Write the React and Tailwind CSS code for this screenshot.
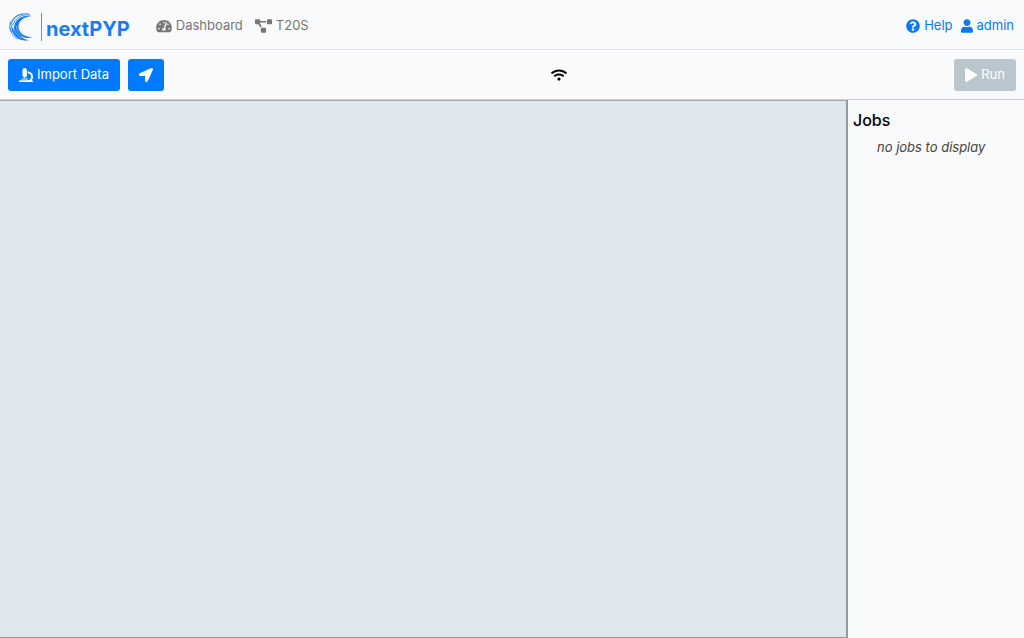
import React from "react";
import {
  FaLocationArrow,
  FaMicroscope,
  FaPlay,
  FaProjectDiagram,
  FaQuestionCircle,
  FaTachometerAlt,
  FaUser,
  FaWifi,
} from "react-icons/fa";

/**
 * Brand mark: a crescent made of brush strokes, a divider and the product name.
 */
const Logo = () => (
  <a href="#home" className="flex items-center text-[#1a7cf5]" aria-label="nextPYP">
    <svg className="h-7 w-6" viewBox="0 0 24 28" fill="none" aria-hidden="true">
      <path
        d="M2 12c0 6 3 12 9 14.500 4 1.500 7 1.300 9 .5-3 0-6-1.500-8-4 4 2.500 8 2.500 11.500 1C16 24.500 10 20 9.500 14c-.3-5 4-10 13.500-11C14 2 7 5.500 5.500 12l-1 5Z"
        fill="currentColor"
      />
      <path
        d="M20 1C11-.5 4 4 2 12M21 2C12 1 6 5 3.500 13M14 1C7 2 2 6 1 12"
        stroke="currentColor"
        strokeWidth="0.8"
      />
      <path d="M1 9v6l2 5M0.500 13l1 5 3 5 4 3" stroke="currentColor" strokeWidth="0.7" />
      <path d="M7.500 13c0 5 3 9 8 12M5 16c1 4 4 7 8 9.500" stroke="#f8fafc" strokeWidth="0.4" />
    </svg>
    <span className="ml-2 h-7 w-px bg-[#5b92d8]" />
    <span className="ml-1 pt-1 text-xl leading-7 font-bold">nextPYP</span>
  </a>
);

/**
 * Link with an icon, used on both sides of the top bar.
 * @param {Object} props - Component props.
 * @param {React.ElementType} props.icon - Icon component.
 * @param {string} props.label - Link text.
 * @param {string} props.href - Link target.
 * @param {string} props.iconClass - Size classes for the icon.
 */
const NavLink = ({ icon: Icon, label, href, iconClass }) => (
  <a href={href} className="flex items-center gap-1">
    <Icon className={iconClass} />
    {label}
  </a>
);

const Header = () => (
  <header className="flex h-[50px] items-center justify-between border-b border-[#dee2e6] pt-1 pr-2.5 pl-[9px]">
    <div className="flex items-center">
      <Logo />
      <nav className="ml-[26px] flex items-center gap-3 pb-0.5 text-[#777]">
        <NavLink href="#dashboard" icon={FaTachometerAlt} label="Dashboard" iconClass="h-3.5 w-4" />
        <NavLink href="#project" icon={FaProjectDiagram} label="T20S" iconClass="h-3.5 w-[17px]" />
      </nav>
    </div>
    <nav className="flex items-center gap-2 pb-0.5 text-[#0d78f2]">
      <NavLink href="#help" icon={FaQuestionCircle} label="Help" iconClass="h-3.5 w-3.5" />
      <NavLink href="#account" icon={FaUser} label="admin" iconClass="h-3.5 w-3" />
    </nav>
  </header>
);

const Toolbar = () => (
  <div className="grid h-[50px] grid-cols-[156px_1fr_62px] items-center border-b border-[#c9ced3] px-2">
    <div className="flex gap-2">
      <button
        type="button"
        className="flex h-8 w-28 shrink-0 items-center justify-center gap-1 rounded-[3px] bg-[#007bff] text-white"
      >
        <FaMicroscope className="h-3.5 w-3.5" />
        Import Data
      </button>
      <button
        type="button"
        aria-label="Navigate"
        className="flex h-8 w-9 shrink-0 items-center justify-center rounded-[3px] bg-[#007bff] text-white"
      >
        <FaLocationArrow className="h-3.5 w-3.5" />
      </button>
    </div>
    <FaWifi className="mx-auto h-4 w-4 text-black" aria-label="Connected" />
    <button
      type="button"
      disabled
      className="flex h-8 items-center justify-center gap-1 rounded-[3px] bg-[#b9c6ce] text-white"
    >
      <FaPlay className="h-3.5 w-3" />
      Run
    </button>
  </div>
);

const JobsPanel = () => (
  <aside className="w-44 shrink-0 px-[5px] py-2">
    <h2 className="text-base leading-6 font-medium text-black">Jobs</h2>
    <p className="pl-6 leading-[30px] text-[#444] italic">no jobs to display</p>
  </aside>
);

const App = () => (
  <div className="flex min-h-screen flex-col bg-[#f8fafc] font-[Inter,'Liberation_Sans',sans-serif] text-[13px]">
    <Header />
    <Toolbar />
    <div className="flex flex-1">
      {/* Project canvas, empty until blocks are added */}
      <main className="flex-1 border-r-2 border-b border-[#9299a0] bg-[#dfe6ed] shadow-[inset_0_1px_0_#a5acb3]" />
      <JobsPanel />
    </div>
  </div>
);

export default App;
